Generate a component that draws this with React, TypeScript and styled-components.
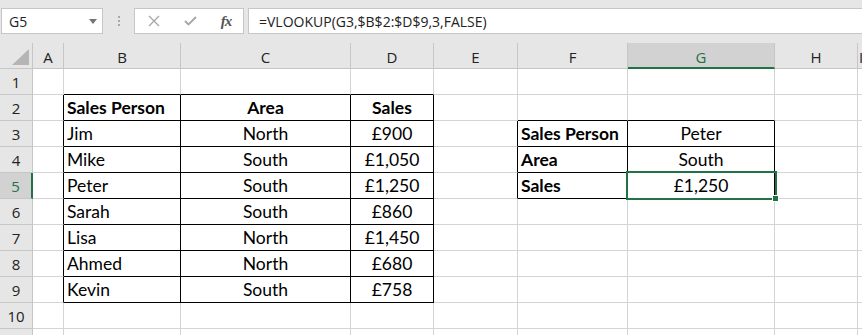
import React from 'react';
import styled, {createGlobalStyle, css} from 'styled-components';

const GREEN = '#217346';
const GRID = '#d4d4d4';
const HEAD_LINE = '#c6c6c6';

const GlobalStyle = createGlobalStyle`
  html, body {
    margin: 0;
    padding: 0;
    background: #ffffff;
    overflow: hidden;
  }
  * {
    box-sizing: border-box;
  }
`;

const Window = styled.div`
  width: 862px;
  height: 335px;
  overflow: hidden;
  background: #e6e6e6;
  font-family: 'Open Sans', 'Noto Sans', sans-serif;
`;

const Toolbar = styled.div`
  height: 43px;
  display: flex;
  align-items: flex-start;
  padding: 8px 0 0 1px;
`;

const NameBox = styled.div`
  width: 102px;
  height: 26px;
  background: #fff;
  border: 1px solid ${HEAD_LINE};
  display: flex;
  align-items: center;
  justify-content: space-between;
  padding: 0 5px 0 7px;
  font-size: 14px;
  color: #222;
`;

const DropArrow = styled.span`
  width: 0;
  height: 0;
  border-left: 4px solid transparent;
  border-right: 4px solid transparent;
  border-top: 5px solid #757575;
`;

const Grip = styled.div`
  width: 31px;
  height: 26px;
  display: flex;
  flex-direction: column;
  align-items: center;
  justify-content: center;
  gap: 2px;
`;

const GripDot = styled.span`
  width: 2px;
  height: 2px;
  background: #a8a8a8;
`;

const FxButtons = styled.div`
  width: 110px;
  height: 26px;
  background: #fff;
  border: 1px solid ${HEAD_LINE};
  display: flex;
  align-items: center;
  padding-left: 10px;
  gap: 18px;
`;

const FxIcon = styled.span`
  width: 18px;
  display: flex;
  align-items: center;
  justify-content: center;
`;

const FxLabel = styled.span`
  font-family: 'Liberation Serif', 'DejaVu Serif', serif;
  font-style: italic;
  font-weight: bold;
  font-size: 15px;
  color: #555;
  letter-spacing: -1px;
`;

const FormulaInput = styled.div`
  flex: 1;
  height: 26px;
  margin-left: 4px;
  margin-right: -4px;
  background: #fff;
  border: 1px solid ${HEAD_LINE};
  display: flex;
  align-items: center;
  padding-left: 10px;
  font-size: 14px;
  color: #222;
  white-space: nowrap;
`;

const Sheet = styled.div`
  display: grid;
  grid-template-columns: 33px 31px 117px 170px 83px 84px 110px 147px 83px 1fr;
  grid-auto-rows: 26px;
`;

const Corner = styled.div`
  border-right: 1px solid ${HEAD_LINE};
  border-bottom: 1px solid ${HEAD_LINE};
  display: flex;
  align-items: flex-end;
  justify-content: flex-end;
  padding: 0 3px 3px 0;
`;

const CornerTriangle = styled.span`
  width: 0;
  height: 0;
  border-left: 17px solid transparent;
  border-bottom: 16px solid #b5b5b5;
`;

const ColHead = styled.div<{$active?: boolean}>`
  border-right: 1px solid ${HEAD_LINE};
  border-bottom: 1px solid ${HEAD_LINE};
  display: flex;
  align-items: center;
  justify-content: center;
  padding-top: 3px;
  font-size: 15px;
  color: #222;
  ${p =>
    p.$active &&
    css`
      background: #d2d2d2;
      color: ${GREEN};
      border-bottom: 2px solid ${GREEN};
    `}
`;

const RowHead = styled.div<{$active?: boolean}>`
  border-right: 1px solid ${HEAD_LINE};
  border-bottom: 1px solid ${HEAD_LINE};
  display: flex;
  align-items: center;
  justify-content: center;
  font-size: 15px;
  color: #222;
  ${p =>
    p.$active &&
    css`
      background: #d2d2d2;
      color: ${GREEN};
      border-right: 2px solid ${GREEN};
    `}
`;

const Cell = styled.div<{$right: string; $bottom: string; $align: string; $bold?: boolean}>`
  position: relative;
  background: #fff;
  border-right: 1px solid ${p => p.$right};
  border-bottom: 1px solid ${p => p.$bottom};
  display: flex;
  align-items: center;
  justify-content: ${p => p.$align};
  padding: 0 3px;
  font-family: Lato, 'Open Sans', sans-serif;
  font-size: 17.5px;
  line-height: 21px;
  font-weight: ${p => (p.$bold ? 700 : 400)};
  color: #000;
  white-space: nowrap;
`;

const Selection = styled.div`
  position: absolute;
  top: -2px;
  left: -2px;
  right: -3px;
  bottom: -2px;
  border: 2px solid ${GREEN};
  z-index: 2;
  pointer-events: none;
`;

const FillHandle = styled.span`
  position: absolute;
  right: -4px;
  bottom: -4px;
  width: 7px;
  height: 7px;
  background: ${GREEN};
  border: 1px solid #fff;
`;

const COLS = ['A', 'B', 'C', 'D', 'E', 'F', 'G', 'H', 'I'];
// row 11 lies mostly below the window edge, so its number is not drawn
const ROWS = [1, 2, 3, 4, 5, 6, 7, 8, 9, 10, 11];
const LAST_VISIBLE_LABEL = 10;

type CellData = {text: string; bold?: boolean; align?: 'left' | 'center'};

const data: Record<string, CellData> = {
  B2: {text: 'Sales Person', bold: true},
  C2: {text: 'Area', bold: true, align: 'center'},
  D2: {text: 'Sales', bold: true, align: 'center'},
  F3: {text: 'Sales Person', bold: true},
  G3: {text: 'Peter', align: 'center'},
  F4: {text: 'Area', bold: true},
  G4: {text: 'South', align: 'center'},
  F5: {text: 'Sales', bold: true},
  G5: {text: '£1,250', align: 'center'},
};

const people: [string, string, string][] = [
  ['Jim', 'North', '£900'],
  ['Mike', 'South', '£1,050'],
  ['Peter', 'South', '£1,250'],
  ['Sarah', 'South', '£860'],
  ['Lisa', 'North', '£1,450'],
  ['Ahmed', 'North', '£680'],
  ['Kevin', 'South', '£758'],
];

people.forEach(([name, area, sales], i) => {
  const r = i + 3;
  data[`B${r}`] = {text: name};
  data[`C${r}`] = {text: area, align: 'center'};
  data[`D${r}`] = {text: sales, align: 'center'};
});

const inTable = (r: number, c: number) =>
  (r >= 2 && r <= 9 && c >= 1 && c <= 3) || (r >= 3 && r <= 5 && c >= 5 && c <= 6);

const CrossIcon = () => (
  <svg width="12" height="12" viewBox="0 0 12 12">
    <path d="M1 1 L11 11 M11 1 L1 11" stroke="#a6a6a6" strokeWidth="1.3" fill="none" />
  </svg>
);

const CheckIcon = () => (
  <svg width="13" height="10" viewBox="0 0 13 10">
    <path d="M1 5 L4.5 8.5 L12 1" stroke="#a6a6a6" strokeWidth="1.8" fill="none" />
  </svg>
);

const App: React.FC = () => {
  const activeRow = 5;
  const activeCol = 6;

  return (
    <Window>
      <GlobalStyle />
      <Toolbar>
        <NameBox>
          <span>G5</span>
          <DropArrow />
        </NameBox>
        <Grip>
          <GripDot />
          <GripDot />
          <GripDot />
        </Grip>
        <FxButtons>
          <FxIcon>
            <CrossIcon />
          </FxIcon>
          <FxIcon>
            <CheckIcon />
          </FxIcon>
          <FxIcon>
            <FxLabel>fx</FxLabel>
          </FxIcon>
        </FxButtons>
        <FormulaInput>=VLOOKUP(G3,$B$2:$D$9,3,FALSE)</FormulaInput>
      </Toolbar>

      <Sheet>
        <Corner>
          <CornerTriangle />
        </Corner>
        {COLS.map((c, ci) => (
          <ColHead key={c} $active={ci === activeCol}>
            {c}
          </ColHead>
        ))}
        {ROWS.map(r => (
          <React.Fragment key={r}>
            <RowHead $active={r === activeRow}>{r <= LAST_VISIBLE_LABEL ? r : null}</RowHead>
            {COLS.map((c, ci) => {
              const cell = data[`${c}${r}`];
              const right = inTable(r, ci) || inTable(r, ci + 1) ? '#000' : GRID;
              const bottom = inTable(r, ci) || inTable(r + 1, ci) ? '#000' : GRID;
              const selected = r === activeRow && ci === activeCol;
              return (
                <Cell
                  key={c}
                  $right={right}
                  $bottom={bottom}
                  $align={cell?.align === 'center' ? 'center' : 'flex-start'}
                  $bold={cell?.bold}>
                  {cell?.text}
                  {selected && (
                    <Selection>
                      <FillHandle />
                    </Selection>
                  )}
                </Cell>
              );
            })}
          </React.Fragment>
        ))}
      </Sheet>
    </Window>
  );
};

export default App;
